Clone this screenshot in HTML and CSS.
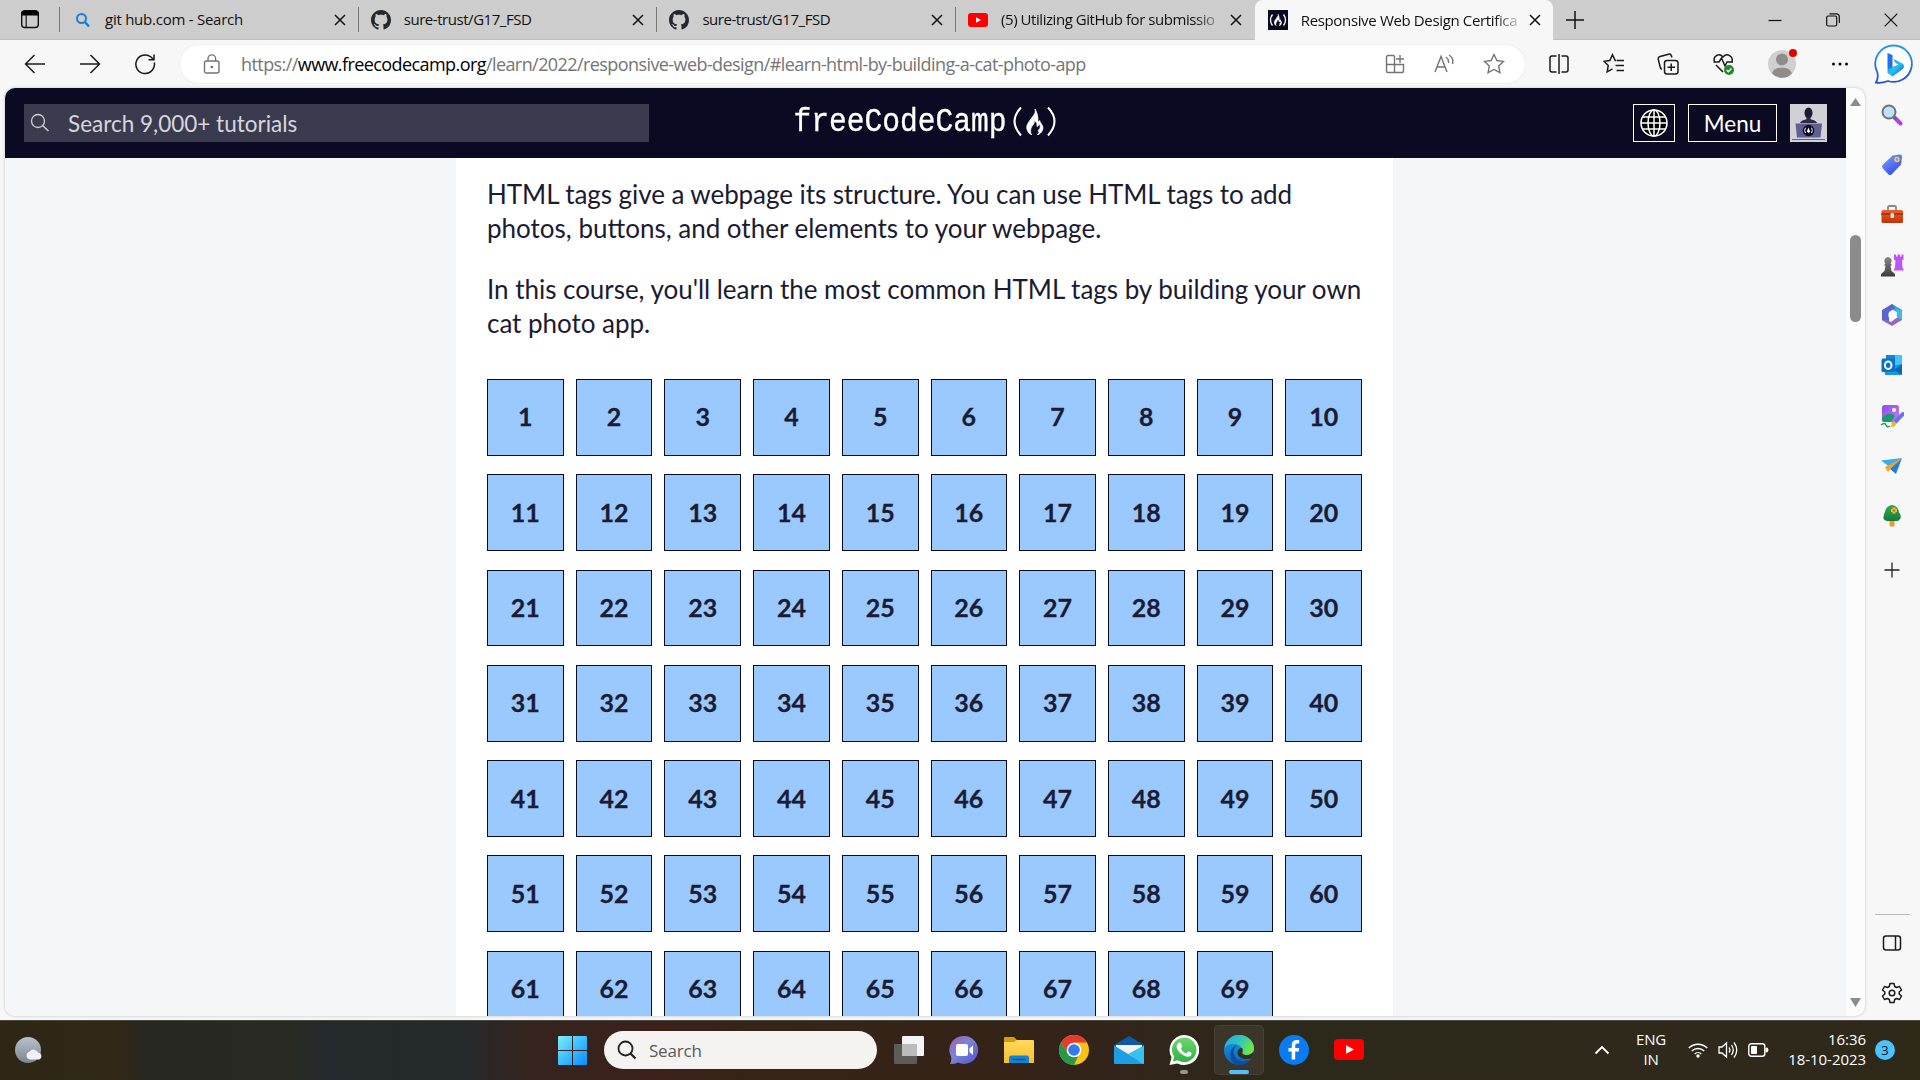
FILE: index.html
```html
<!DOCTYPE html>
<html lang="en">
<head>
<meta charset="utf-8">
<title>Responsive Web Design Certification</title>
<link rel="stylesheet" href="styles.css">
</head>
<body>
<svg width="0" height="0" class="defs">
  <defs>
    <symbol id="x" viewBox="0 0 12 12"><path d="M1 1l10 10M11 1L1 11" stroke="#111" stroke-width="1.5" fill="none"/></symbol>
    <symbol id="github" viewBox="0 0 16 16"><path fill="#24292f" d="M8 0C3.58 0 0 3.58 0 8c0 3.54 2.29 6.53 5.47 7.59.4.07.55-.17.55-.38 0-.19-.01-.82-.01-1.49-2.01.37-2.53-.49-2.69-.94-.09-.23-.48-.94-.82-1.13-.28-.15-.68-.52-.01-.53.63-.01 1.08.58 1.23.82.72 1.21 1.87.87 2.33.66.07-.52.28-.87.51-1.07-1.78-.2-3.64-.89-3.64-3.95 0-.87.31-1.59.82-2.15-.08-.2-.36-1.02.08-2.12 0 0 .67-.21 2.2.82.64-.18 1.32-.27 2-.27s1.36.09 2 .27c1.53-1.04 2.2-.82 2.2-.82.44 1.1.16 1.92.08 2.12.51.56.82 1.27.82 2.15 0 3.07-1.87 3.75-3.65 3.95.29.25.54.73.54 1.48 0 1.07-.01 1.93-.01 2.2 0 .21.15.46.55.38A8.01 8.01 0 0 0 16 8c0-4.42-3.58-8-8-8z"/></symbol>
    <symbol id="flame" viewBox="0 0 18 27"><path fill="currentColor" stroke="currentColor" stroke-width=".8" d="M9 0c1 4-1 6-4 10-3 4-6 8-4 12 .8 2 2.500 4 4.500 5-2-4-1-7 1-10 1.500-2 2-3.500 2-5 2.500 2 3 4 2.500 6 1.500 0 2-1.500 2-3 2 2 2 5 0 6.500-1 1-1 2 .500 2.500-.5 1-1 2-2 3 5-2 7-7 5-10-1-2-2.500-3-2.500-5-1 1-1.500 1.500-2 1 .5-5-1-10-3-13z"/></symbol>
    <linearGradient id="blue" x1="0" y1="0" x2="1" y2="1"><stop offset="0" stop-color="#7af0ff"/><stop offset=".5" stop-color="#3dbdff"/><stop offset="1" stop-color="#0a8cff"/></linearGradient>
    <linearGradient id="bing" x1="0" y1="0" x2="0" y2="1"><stop offset="0" stop-color="#2b9be8"/><stop offset="1" stop-color="#2350d8"/></linearGradient>
    <linearGradient id="bingb" x1="0" y1="0" x2="1" y2="1"><stop offset="0" stop-color="#1d6ff0"/><stop offset=".5" stop-color="#22c6ee"/><stop offset="1" stop-color="#1b49cc"/></linearGradient>
    <linearGradient id="tag" x1="0" y1="0" x2=".7" y2="1"><stop offset="0" stop-color="#7ba9ff"/><stop offset="1" stop-color="#3347f0"/></linearGradient>
    <linearGradient id="red" x1="0" y1="0" x2="0" y2="1"><stop offset="0" stop-color="#e8612c"/><stop offset="1" stop-color="#bd3409"/></linearGradient>
    <linearGradient id="dark" x1="0" y1="0" x2="0" y2="1"><stop offset="0" stop-color="#888"/><stop offset="1" stop-color="#3c3c3c"/></linearGradient>
    <linearGradient id="purple" x1="0" y1="0" x2="1" y2="1"><stop offset="0" stop-color="#8a4cf0"/><stop offset="1" stop-color="#c77bff"/></linearGradient>
    <linearGradient id="chat" x1="0" y1="0" x2="1" y2="1"><stop offset="0" stop-color="#9a62b0"/><stop offset=".45" stop-color="#7b83d8"/><stop offset="1" stop-color="#5252c8"/></linearGradient>
    <linearGradient id="folder" x1="0" y1="0" x2="0" y2="1"><stop offset="0" stop-color="#ffda60"/><stop offset="1" stop-color="#f7bd2a"/></linearGradient>
    <linearGradient id="edgetop" x1="0" y1="0" x2="1" y2=".5"><stop offset="0" stop-color="#25a5e0"/><stop offset=".5" stop-color="#2cc5c0"/><stop offset="1" stop-color="#70e645"/></linearGradient>
    <linearGradient id="edgelow" x1="0" y1="0" x2="0" y2="1"><stop offset="0" stop-color="#1ba0e4"/><stop offset="1" stop-color="#0b62ba"/></linearGradient>
    <linearGradient id="green" x1="0" y1="0" x2="0" y2="1"><stop offset="0" stop-color="#6fd66f"/><stop offset="1" stop-color="#2fb344"/></linearGradient>
    <linearGradient id="moon" x1="0" y1="0" x2="0" y2="1"><stop offset="0" stop-color="#b9c2cc"/><stop offset="1" stop-color="#7d8590"/></linearGradient>
    <linearGradient id="tree" x1="0" y1="0" x2="0" y2="1"><stop offset="0" stop-color="#35a853"/><stop offset="1" stop-color="#157a3c"/></linearGradient>
  </defs>
</svg>

<div class="browser">
  <div class="tabstrip">
    <div class="tab-actions">
      <svg width="20" height="20" viewBox="0 0 20 20"><rect x="1.700" y="2" width="16.600" height="16.500" rx="3" fill="none" stroke="#111" stroke-width="1.400"/><path d="M1 5a4 4 0 0 1 4-3.700h10A4 4 0 0 1 19 5v1.500H1z" fill="#000"/><path d="M6.200 6v12" stroke="#222" stroke-width="1.300"/></svg>
    </div>
    <div class="tab">
      <svg class="favicon" width="20" height="20" viewBox="0 0 20 20"><circle cx="9.500" cy="8.500" r="4.500" fill="none" stroke="#1b7fd6" stroke-width="2"/><path d="M13 12l4 4.500" stroke="#1b7fd6" stroke-width="2.400"/></svg>
      <span class="label t1">git hub.com - Search</span>
      <svg class="close" width="12" height="12"><use href="#x"/></svg>
    </div>
    <div class="tab">
      <svg class="favicon" width="20" height="20"><use href="#github"/></svg>
      <span class="label t2">sure-trust/G17_FSD</span>
      <svg class="close" width="12" height="12"><use href="#x"/></svg>
    </div>
    <div class="tab">
      <svg class="favicon" width="20" height="20"><use href="#github"/></svg>
      <span class="label t2">sure-trust/G17_FSD</span>
      <svg class="close" width="12" height="12"><use href="#x"/></svg>
    </div>
    <div class="tab">
      <svg class="favicon" width="20" height="20" viewBox="0 0 20 20"><rect y="3" width="20" height="14" rx="3" fill="#f00"/><path d="M8 7.200v5.600l5-2.800z" fill="#fff"/></svg>
      <span class="label fade t3">(5) Utilizing GitHub for submissio</span>
      <svg class="close" width="12" height="12"><use href="#x"/></svg>
    </div>
    <div class="tab active">
      <svg class="favicon" width="20" height="20" viewBox="0 0 20 20"><rect width="20" height="20" fill="#0a0a23"/><path d="M4.500 4.500q-4 5.500 0 11M15.500 4.500q4 5.500 0 11" fill="none" stroke="#fff" stroke-width="1.300"/><svg x="6" y="4" width="8" height="12" color="#fff"><use href="#flame"/></svg></svg>
      <span class="label fade t4">Responsive Web Design Certifica</span>
      <svg class="close" width="12" height="12"><use href="#x"/></svg>
    </div>
    <svg class="newtab" width="18" height="18" viewBox="0 0 18 18"><path d="M9 0v18M0 9h18" stroke="#111" stroke-width="1.500"/></svg>
    <div class="window-buttons">
      <svg width="14" height="14" viewBox="0 0 14 14"><path d="M.5 7.500h13" stroke="#111" stroke-width="1.200"/></svg>
      <svg width="14" height="14" viewBox="0 0 14 14"><rect x=".7" y="3" width="10" height="10" rx="1.500" fill="none" stroke="#111" stroke-width="1.200"/><path d="M3.500 .8h7a2.800 2.800 0 0 1 2.800 2.800v6.500" fill="none" stroke="#111" stroke-width="1.200"/></svg>
      <svg width="14" height="14" viewBox="0 0 14 14"><path d="M.7 .7l12.600 12.600M13.300 .7L.7 13.300" stroke="#111" stroke-width="1.200"/></svg>
    </div>
  </div>

  <div class="toolbar">
    <div class="nav">
      <svg width="22" height="22" viewBox="0 0 22 22"><path d="M21 11H2M10.500 2L1.500 11l9 9" class="ln"/></svg>
      <svg width="22" height="22" viewBox="0 0 22 22"><path d="M1 11h19M11.500 2l9 9-9 9" class="ln"/></svg>
      <svg width="22" height="22" viewBox="0 0 22 22"><path d="M20.300 9.500A9.300 9.300 0 1 1 17 4l2.500 2.500M20 1.500v5.300h-5.500" class="ln"/></svg>
    </div>
    <div class="address">
      <svg width="18" height="20" viewBox="0 0 18 20"><rect x="1.500" y="7" width="14.500" height="12" rx="2" class="lg"/><path d="M5 7V4.700a3.800 3.800 0 0 1 7.600 0V7" class="lg"/><circle cx="8.800" cy="13" r="1.300" fill="#666"/></svg>
      <span class="url">https://<b>www.freecodecamp.org</b>/learn/2022/responsive-web-design/#learn-html-by-building-a-cat-photo-app</span>
      <div class="address-tools">
        <svg width="20" height="20" viewBox="0 0 20 20"><path d="M9 1.500H3A1.500 1.500 0 0 0 1.500 3v14A1.500 1.500 0 0 0 3 18.500h14a1.500 1.500 0 0 0 1.500-1.500v-6.500H1.500M9.500 1.500v17M15 1v8M11 5h8" class="lg"/></svg>
        <svg width="20" height="20" viewBox="0 0 20 20"><path d="M1 18L7 2.500 13 18M3 13h8M12 3q3 2 2.500 6M15 1q5 3 3.500 9" class="lg"/></svg>
        <svg width="22" height="22" viewBox="0 0 22 22"><path d="M11 1.500l2.900 6 6.600.9-4.800 4.600 1.200 6.600L11 16.500l-5.900 3.100 1.200-6.600L1.500 8.400l6.600-.9z" class="lg"/></svg>
      </div>
    </div>
    <div class="tools">
      <svg width="22" height="22" viewBox="0 0 22 22"><path d="M8.500 3H4a2 2 0 0 0-2 2v12a2 2 0 0 0 2 2h4.500M13.500 3H18a2 2 0 0 1 2 2v12a2 2 0 0 1-2 2h-4.500M11 1v20" class="ln"/></svg>
      <svg width="22" height="22" viewBox="0 0 22 22"><path d="M13 7.500h-.8L9.500 1.700 6.800 7.500l-5.800.8 4.200 4.200-1 6.300 5.300-3M13.500 7.500h7.500M12.500 12.500H21M13.500 17.500H21" class="ln"/></svg>
      <svg width="22" height="22" viewBox="0 0 22 22"><rect x="7.500" y="7.500" width="13.500" height="13.500" rx="2.500" class="ln"/><path d="M14.200 10.500v7.500M10.500 14.200H18M4.800 16.500Q3.500 15.500 3.200 14L1.300 6.500a2.500 2.500 0 0 1 1.800-3L11.500 1.200a2.500 2.500 0 0 1 3 1.800l.4 1.500" class="ln"/></svg>
      <svg width="24" height="24" viewBox="0 0 24 24"><path d="M2.500 10C.5 4 7 .5 11 5c4-4.500 10.500-1 9 5M1.500 10H7l2.500-4 3.500 8 2-4h6M4 13l7 7" class="ln"/><circle cx="17" cy="18" r="5" fill="#1d8a25"/><path d="M14.700 18l1.700 1.700 3-3.200" stroke="#fff" stroke-width="1.300" fill="none"/></svg>
      <svg class="profile" width="30" height="34" viewBox="0 0 30 34"><circle cx="14" cy="19" r="14" fill="#d2d0ce"/><circle cx="14" cy="14.500" r="6" fill="#8f8c8a"/><path d="M4 28.500Q6 22.500 14 22.500t10 6a14 14 0 0 1-20 0z" fill="#8f8c8a"/><circle cx="25" cy="8" r="4" fill="#e30000"/></svg>
      <svg width="18" height="6" viewBox="0 0 18 6"><circle cx="2.500" cy="3" r="1.500"/><circle cx="9" cy="3" r="1.500"/><circle cx="15.500" cy="3" r="1.500"/></svg>
      <svg class="bing" width="40" height="40" viewBox="0 0 40 40"><path d="M20 1.500A18.200 18.200 0 1 1 14 37Q7 39.500 2 38.500 5 33 3 27.500A18.300 18.300 0 0 1 20 1.500z" fill="#fff" stroke="url(#bing)" stroke-width="1.800"/><path d="M13.500 9l5 2v17l-5-3.500z" fill="#2370ec"/><path d="M19.500 15l9 4.500c2.500 2 1.500 5-1 6.500l-9 6.500-5-3.500v-4l11-4.500-3-1.500z" fill="url(#bingb)"/></svg>
    </div>
  </div>

  <div class="body">
    <main class="page">
      <div class="viewport">
        <header class="fcc-header">
          <div class="fcc-search">
            <svg width="20" height="20" viewBox="0 0 20 20"><circle cx="8" cy="8" r="6.500" fill="none" stroke="#d0d0d5" stroke-width="1.300"/><path d="M12.800 12.800L18.500 18" stroke="#d0d0d5" stroke-width="1.500"/></svg>
            <span>Search 9,000+ tutorials</span>
          </div>
          <div class="logo"><span class="word">freeCodeCamp</span><svg width="46" height="32" viewBox="0 0 46 32"><path d="M9 1.500Q-4 15 9 29.500M36 1.500q13 13.500 0 28" fill="none" stroke="#fff" stroke-width="2"/><svg x="14" y="3" width="18" height="26" color="#fff"><use href="#flame"/></svg></svg></div>
          <div class="fcc-right">
            <div class="lang"><svg width="28" height="28" viewBox="0 0 28 28"><circle cx="14" cy="14" r="13" fill="#000" stroke="#fff" stroke-width="1.600"/><ellipse cx="14" cy="14" rx="6" ry="13" fill="none" stroke="#fff" stroke-width="1.500"/><path d="M14 1v26M1 14h26M3 8h22M3 20h22" stroke="#fff" stroke-width="1.500"/></svg></div>
            <div class="menu">Menu</div>
            <svg width="37" height="38" viewBox="0 0 37 38"><rect width="37" height="38" fill="#d0d0d5"/><ellipse cx="18.500" cy="9" rx="4" ry="5.500" fill="#1b1b32"/><path d="M10 19q1-3 6-3.500l1-2h3l1 2q5 .5 6 3.500z" fill="#2a2a40"/><path d="M5.500 19.500h26.500l-1.500 14H7z" fill="#5f5f94"/><circle cx="18.500" cy="26.500" r="5.800" fill="#0a0a23"/><path d="M15.500 23.800q-1.800 2.600 0 5.200M21.500 23.800q1.800 2.600 0 5.200" stroke="#fff" fill="none"/><path d="M18.500 23.500l1.700 4-1.700 1.500-1.700-1.500z" fill="#fff"/><path d="M2 35.500h33" stroke="#5f5f94"/></svg>
          </div>
        </header>
        <div class="content">
          <article class="card">
            <p><span class="tight">HTML tags give a webpage its structure. You can use HTML tags to add</span><br>photos, buttons, and other elements to your webpage.</p>
            <p class="snug">In this course, you'll learn the most common HTML tags by building your own<br>cat photo app.</p>
            <div class="steps">
              <a>1</a><a>2</a><a>3</a><a>4</a><a>5</a><a>6</a><a>7</a><a>8</a><a>9</a><a>10</a>
              <a>11</a><a>12</a><a>13</a><a>14</a><a>15</a><a>16</a><a>17</a><a>18</a><a>19</a><a>20</a>
              <a>21</a><a>22</a><a>23</a><a>24</a><a>25</a><a>26</a><a>27</a><a>28</a><a>29</a><a>30</a>
              <a>31</a><a>32</a><a>33</a><a>34</a><a>35</a><a>36</a><a>37</a><a>38</a><a>39</a><a>40</a>
              <a>41</a><a>42</a><a>43</a><a>44</a><a>45</a><a>46</a><a>47</a><a>48</a><a>49</a><a>50</a>
              <a>51</a><a>52</a><a>53</a><a>54</a><a>55</a><a>56</a><a>57</a><a>58</a><a>59</a><a>60</a>
              <a>61</a><a>62</a><a>63</a><a>64</a><a>65</a><a>66</a><a>67</a><a>68</a><a>69</a>
            </div>
          </article>
        </div>
      </div>
      <div class="scrollbar">
        <svg width="11" height="8" viewBox="0 0 11 8"><path d="M5.500 0L11 8H0z" fill="#8b8b8b"/></svg>
        <div class="thumb"></div>
        <svg class="down" width="11" height="9" viewBox="0 0 11 9"><path d="M5.500 9L11 0H0z" fill="#8b8b8b"/></svg>
      </div>
    </main>
    <aside class="sidebar">
      <div class="apps">
        <svg viewBox="0 0 24 24"><path d="M15 15l5.500 5.500" stroke="#b23cf5" stroke-width="4" stroke-linecap="round"/><path d="M13 13l3 3" stroke="#666" stroke-width="3"/><circle cx="9" cy="9" r="6.500" fill="#bfe2fa" stroke="#70757a" stroke-width="2"/></svg>
        <svg viewBox="0 0 24 24"><path d="M12.500 2.500L20 1.500q2 0 2 2l-1 8L11.500 21.500q-1.500 1-3 0L2.500 15q-1-1.500 0-3z" fill="url(#tag)"/><circle cx="17" cy="6.500" r="2" fill="#8a8af0" stroke="#ffd12e" stroke-width="1.500"/></svg>
        <svg viewBox="0 0 24 24"><path d="M8 7V4.500Q8 3 9.500 3h5Q16 3 16 4.500V7" fill="none" stroke="#888" stroke-width="1.800"/><rect x="1.500" y="7" width="21.500" height="13" rx="1.500" fill="url(#red)"/><path d="M1 11h22" stroke="#a32c06" stroke-width="1.500"/><rect x="10.500" y="10" width="3.500" height="5" rx="1" fill="#ddd"/></svg>
        <svg viewBox="0 0 24 24"><path d="M14 1.500h2v2h1.500v-2h2.500v2h1.500v-2h2v5l-1.500 1 .5 7 1.500 3h-10.500l1.500-3 .5-7-1.500-1z" fill="#bd55f5"/><path d="M8 4a3.800 3.800 0 0 1 2.500 6.500l1.500 1.500-1.500 1 1 5 3.500 3v2.500H1V21l3.500-3 1-5L4 12l1.500-1.500A3.800 3.800 0 0 1 8 4z" fill="url(#dark)"/></svg>
        <svg viewBox="0 0 24 24"><path d="M12 1l10 6v10l-5-3V9l-7-4-4 2z" fill="#2e9ce0"/><path d="M12 1L2 7v10l5 3 2-2V9l6-4z" fill="#5a63cf"/><path d="M2 17l10 6 10-6v-5l-7 4-4 3-4-2z" fill="#9467c2"/><path d="M15 5l7 3v9l-5-3V9z" fill="#3bbbe8"/><path d="M12 8l3.500 2v4L12 16l-3.500-2v-4z" fill="#fff"/></svg>
        <svg viewBox="0 0 24 24"><rect x="6" y="2" width="16" height="12" rx="1" fill="#42c5f5"/><path d="M6 2h9v10H6z" fill="#1683cf"/><path d="M4 14l18-3v11H5z" fill="#1997e0"/><path d="M22 11v11l-8-5z" fill="#0c65b5"/><rect x="1.500" y="5.500" width="13.500" height="13.500" rx="1.500" fill="#0873c9"/><ellipse cx="8.200" cy="12.200" rx="3.300" ry="3.700" fill="none" stroke="#fff" stroke-width="2"/></svg>
        <svg viewBox="0 0 24 24"><rect x="2" y="1" width="17" height="17" rx="2.500" fill="url(#purple)"/><circle cx="14" cy="6" r="2" fill="#fff"/><path d="M2 14q8-8 13-2l-4 6H4q-2 0-2-2z" fill="#159c68"/><path d="M23 10L14 19" stroke="#6b72e8" stroke-width="4" stroke-linecap="round"/><path d="M14 17l2.500 2.500q-2 4.500-6 3 2-2 .5-3.500z" fill="#f9b427"/><path d="M1 21q4-3 5 0t4 1" fill="none" stroke="#159c68" stroke-width="1.500"/></svg>
        <svg viewBox="0 0 24 24"><path d="M1 6.500L22 4 11 14z" fill="#37abf4"/><path d="M22 4l-6 16-6-5z" fill="#2479e4"/><path d="M22 4L5 13l3 5 3-4z" fill="#f2a31b"/></svg>
        <svg viewBox="0 0 24 24"><rect x="9.500" y="16" width="5" height="6.500" rx="1" fill="#f0962b"/><path d="M12 1q6 1 7 7 3 5 1 7-1 2-3 2H7q-4-1-3.500-4 0-3 1.500-5 1-6 7-7z" fill="url(#tree)"/><path d="M14 3.500v6M11 6.500h6" stroke="#fabe20" stroke-width="3"/><circle cx="14" cy="6.500" r="1.200" fill="#e05c1c"/></svg>
        <svg class="plus" viewBox="0 0 24 24"><path d="M12 4.500v15M4.500 12h15" stroke="#222" stroke-width="1.300"/></svg>
      </div>
      <div class="side-bottom">
        <svg viewBox="0 0 24 24"><rect x="3.500" y="5" width="17" height="14" rx="2.500" class="ln"/><path d="M15.500 5v14" class="ln"/></svg>
        <svg viewBox="0 0 24 24"><path d="M10 2.500h4l.7 3 1.800 1 3-1 2 3.500-2.300 2v2l2.300 2-2 3.500-3-1-1.800 1-.7 3h-4l-.7-3-1.800-1-3 1-2-3.500 2.300-2v-2L2.500 9l2-3.500 3 1 1.800-1z" class="ln" stroke-linejoin="round"/><circle cx="12" cy="12" r="2.800" class="ln"/></svg>
      </div>
    </aside>
  </div>
</div>

<footer class="taskbar">
  <svg class="weather" width="30" height="30" viewBox="0 0 30 30"><circle cx="14" cy="15" r="13" fill="url(#moon)"/><path d="M16 24.500a4 4 0 0 1-.5-7.800 5 5 0 0 1 8.700 1A3.500 3.500 0 0 1 25 24.500z" fill="#eef1f6"/></svg>
  <svg class="start" width="29" height="29" viewBox="0 0 29 29"><path fill="url(#blue)" d="M0 1q0-1 1-1h13v14H0zM15 0h13q1 0 1 1v13H15zM0 15h14v14H1q-1 0-1-1zM15 15h14v13q0 1-1 1H15z"/></svg>
  <div class="search">
    <svg width="20" height="20" viewBox="0 0 20 20"><circle cx="8.500" cy="8.500" r="7" fill="none" stroke="#222" stroke-width="1.800"/><path d="M13.500 13.500l5 5" stroke="#222" stroke-width="2.300"/></svg>
    <span>Search</span>
  </div>
  <div class="pinned">
    <div class="app"><svg viewBox="0 0 30 30"><rect x="8" y="1" width="22" height="20" rx="1" fill="#f4f4f4"/><rect y="9" width="23" height="20" rx="1" fill="#666" opacity=".85"/><rect x="8" y="9" width="15" height="12" fill="#bbb"/></svg></div>
    <div class="app"><svg viewBox="0 0 30 30"><path d="M15 1a14 14 0 1 1-6 26.600Q5 29.500 1 29q2-3 1-7.500A14 14 0 0 1 15 1z" fill="url(#chat)"/><rect x="7" y="9" width="12" height="12" rx="2" fill="#fff"/><path d="M20.500 13.500l3.500-3v9.500l-3.500-3z" fill="#fff"/></svg></div>
    <div class="app"><svg viewBox="0 0 30 30"><path d="M0 3q0-1 1-1h9l3 3h5v6H0z" fill="#d99b0a"/><path d="M0 7h10l3-2h16q1 0 1 1v22H0z" fill="url(#folder)"/><path d="M5 28v-5q0-2.500 2.500-2.500h15Q25 20.500 25 23v5z" fill="#1482d4"/><path d="M8.500 24.500h13" stroke="#0b5291" stroke-width="1.300"/></svg></div>
    <div class="app"><svg viewBox="0 0 30 30"><circle cx="15" cy="15" r="15" fill="#fbc117"/><path d="M2 7.500a15 15 0 0 1 26 0H15l-6 11z" fill="#e33b2e"/><path d="M2 7.500l7 11q3 4.500 10 3L15 30A15 15 0 0 1 2 7.500z" fill="#279847"/><circle cx="15" cy="15" r="7.300" fill="#fff"/><circle cx="15" cy="15" r="5.800" fill="#2f7bf0"/></svg></div>
    <div class="app"><svg viewBox="0 0 30 30"><path d="M15 1l15 9v5H0v-5z" fill="#0e5aa6"/><path d="M2 10h26v12H2z" fill="#f3f3f3"/><path d="M0 10.500L30 28.500q0 .5-1 .5H1q-1 0-1-1z" fill="#1d9ee6"/><path d="M30 10.500v17.500q0 1-1 1L14 19z" fill="#36c1f3"/></svg></div>
    <div class="app whatsapp"><svg viewBox="0 0 30 30"><path d="M15 0A15 15 0 1 1 8.500 28.400L.5 30l2-7.500A15 15 0 0 1 15 0z" fill="#fff"/><path d="M15.300 2.500a12.300 12.300 0 1 1-6.500 22.800L4 26.500l1.200-4.700A12.300 12.300 0 0 1 15.300 2.500z" fill="url(#green)"/><path d="M9.500 8q1.500-1 2.500.2l1.200 3q0 .8-1.500 2.300 2 3.500 5.500 5l2-2q.7-.3 3.300 1.300.5 1.200-.7 2.900-2.800 2-7-.3-4.500-2.400-6.500-6.200-2-4 1.200-6.200z" fill="#fff"/></svg><i></i></div>
    <div class="app edge"><svg viewBox="0 0 30 30"><circle cx="15" cy="15" r="15" fill="url(#edgelow)"/><path d="M1 10.500C4 3 9 0 15 0c9 0 15 6.500 15 13 0 5-3.500 7-7 7-4 0-5.500-1.500-4.500-3 1-2.500-1-7-7-8Q4.500 8 1 13z" fill="url(#edgetop)"/><path d="M13 10.500c-4 3-4.500 8-1.500 12 3.500 4.500 9 4 14.500 2.500A15 15 0 0 1 12 29.700C4 25 5 12 13 10.500z" fill="#0d4f9e"/><path d="M18.500 17c-1 1.500.5 3 4.500 3 2.500 0 4.500-1 6-3l1 1.500-2.500 5c-5 1.500-14 .5-14-6 0-3 3.500-5.500 5-4z" fill="#35301f"/></svg><i></i></div>
    <div class="app"><svg viewBox="0 0 30 30"><circle cx="15" cy="15" r="15" fill="#0b7bf1"/><path d="M12.700 24.500v-8H9.500V13h3.200v-2.500q0-5.500 5-5.500h2.500v3.500h-2q-2 0-2 2V13h4l-.6 3.500h-3.400v8z" fill="#fff"/></svg></div>
    <div class="app"><svg viewBox="0 0 30 30"><rect y="4" width="30" height="21" rx="4" fill="#f00"/><path d="M12 10.200v8.600l8-4.300z" fill="#fff"/></svg></div>
  </div>
  <div class="tray">
    <svg class="chev" width="16" height="12" viewBox="0 0 16 12"><path d="M1.500 9.500L8 3l6.500 6.500" fill="none" stroke="#fff" stroke-width="1.800"/></svg>
    <div class="lang-ind">ENG<br>IN</div>
    <svg class="wifi" width="20" height="16" viewBox="0 0 20 16"><path d="M.8 6a13 13 0 0 1 18.400 0M3.800 9a8.800 8.800 0 0 1 12.400 0M6.700 12a4.700 4.700 0 0 1 6.600 0" fill="none" stroke="#fff" stroke-width="1.400"/><circle cx="10" cy="14" r="1.700" fill="#fff"/></svg>
    <svg class="vol" width="20" height="18" viewBox="0 0 20 18"><path d="M1 6h3l4.500-4v14L4 12H1zM11 6.500q1.800 2.500 0 5M13.500 4q3.500 5 0 10M16 1.500q5.500 7.500 0 15" fill="none" stroke="#fff" stroke-width="1.300"/></svg>
    <svg class="bat" width="21" height="14" viewBox="0 0 21 14"><rect x=".8" y=".8" width="16" height="12.400" rx="2.500" fill="none" stroke="#fff" stroke-width="1.400"/><rect x="3" y="3" width="6" height="8" rx="1" fill="#fff"/><path d="M18 5q2-.5 2 2t-2 2z" fill="#fff" stroke="#fff"/></svg>
    <div class="clock">16:36<br>18-10-2023</div>
    <div class="badge">3</div>
  </div>
</footer>
</body>
</html>
```
FILE: styles.css
```css
* { box-sizing: border-box; }
body { margin: 0; width: 1920px; height: 1080px; overflow: hidden; display: flex; flex-direction: column; font-family: "Open Sans", "Noto Sans", sans-serif; background: #f7f7f7; color: #111; }
svg { flex: none; display: block; }
.defs { position: absolute; }
.ln { fill: none; stroke: #1b1b1b; stroke-width: 1.500; }
.lg { fill: none; stroke: #737373; stroke-width: 1.400; }
.browser { height: 1020px; display: flex; flex-direction: column; flex: none; }

.tabstrip { height: 40px; flex: none; display: flex; align-items: center; background: #cdcdcd; border-bottom: 1px solid #bfbfbf; }
.tab-actions { width: 60px; height: 25px; padding: 2px 0 0 20px; border-right: 1px solid #777; }
.tab { width: 298.700px; height: 25px; display: flex; align-items: center; padding: 0 12px 0 12px; border-right: 1px solid #777; }
.tab:nth-child(5) { border-right-color: transparent; }
.tab.active { height: 41px; margin-bottom: -1px; background: #f7f7f7; border: 0; border-radius: 8px 8px 0 0; padding-left: 13px; }
.favicon { margin-right: 13px; }
.label { flex: 1; min-width: 0; font-size: 15px; line-height: 20px; padding-bottom: 1px; white-space: nowrap; }
.fade { -webkit-mask-image: linear-gradient(90deg, #000 88%, rgba(0,0,0,.15) 100%); mask-image: linear-gradient(90deg, #000 88%, rgba(0,0,0,.15) 100%); }
.close { margin-left: 9px; }
.t2 { letter-spacing: -0.450px; }
.t1 { letter-spacing: -0.250px; }
.t3 { letter-spacing: -0.450px; }
.t4 { letter-spacing: -0.350px; }
.newtab { margin-left: 13px; }
.window-buttons { margin-left: auto; display: flex; gap: 44px; padding-right: 22px; }

.toolbar { height: 48px; flex: none; display: flex; align-items: center; }
.nav { width: 180px; padding-left: 24px; display: flex; gap: 33px; }
.address { width: 1345px; height: 38px; border-radius: 19px; background: #fff; display: flex; align-items: center; padding: 0 20px 0 23px; box-shadow: 0 0 2px #ddd; }
.url { margin-left: 20px; padding-bottom: 1px; font-size: 18px; color: #757575; white-space: nowrap; letter-spacing: -0.580px; }
.url b { font-weight: 400; color: #000; }
.address-tools { margin-left: auto; display: flex; align-items: center; gap: 29px; }
.tools { flex: 1; display: flex; align-items: center; padding-left: 23px; gap: 32.500px; }
.profile { margin-top: -5px; }
.bing { margin-left: -7px; }

.body { flex: 1; min-height: 0; display: flex; }
.page { width: 1860px; height: 928px; margin-left: 5px; display: flex; border-radius: 10px; overflow: hidden; background: #fcfcfc; box-shadow: 0 0 3px #bbb; flex: none; }
.viewport { width: 1841px; display: flex; flex-direction: column; overflow: hidden; background: #f5f6f7; }
.fcc-header { height: 70px; flex: none; display: grid; grid-template-columns: 625px 1fr 625px; align-items: center; padding: 0 19px; background: #0a0a23; font-family: Lato, sans-serif; }
.fcc-search { height: 38px; background: #3b3b4f; display: flex; align-items: center; padding-left: 6px; color: #d6d6dc; font-size: 22.500px; }
.fcc-search span { margin-left: 18px; white-space: nowrap; }
.logo { display: flex; align-items: center; justify-content: center; color: #fff; margin-top: -3px; }
.word { font-family: "Liberation Mono", monospace; font-size: 29.600px; line-height: 32px; transform: scaleY(1.120); -webkit-text-stroke: .3px #fff; }
.logo svg { margin-left: 5px; }
.fcc-right { display: flex; justify-content: flex-end; gap: 13px; }
.lang, .menu { height: 38px; border: 1px solid #fff; display: flex; align-items: center; justify-content: center; }
.lang { width: 42px; }
.menu { width: 89px; color: #fff; font-size: 22.500px; }

.content { flex: 1; display: flex; justify-content: center; min-height: 0; overflow: hidden; }
.card { width: 937px; height: 1000px; margin-left: -2px; background: #fff; padding: 19px 31px 0; font-family: Lato, sans-serif; font-size: 26px; line-height: 34px; color: #1b1b32; }
.card p { margin: 0 0 27px; white-space: nowrap; }
.tight { letter-spacing: -0.070px; }
.snug { letter-spacing: -0.030px; }
.steps { display: grid; grid-template-columns: repeat(10, 1fr); column-gap: 12px; row-gap: 18.600px; margin-top: 39px; }
.steps a { aspect-ratio: 1; border: 1px solid #0a0a23; background: #99c9ff; display: flex; align-items: center; justify-content: center; padding-bottom: 2px; font-weight: 700; font-size: 25px; -webkit-text-stroke: .3px #1b1b32; }

.scrollbar { width: 19px; display: flex; flex-direction: column; align-items: center; padding: 10px 1px 9px 0; }
.thumb { width: 11px; height: 87px; margin-top: 129px; border-radius: 6px; background: #8b8b8b; }
.down { margin-top: auto; }
.sidebar { width: 55px; display: flex; flex-direction: column; align-items: center; }
.sidebar svg { width: 24px; height: 24px; }
.apps { display: flex; flex-direction: column; gap: 26.100px; padding: 15px 1px 0 0; }
.apps .plus { margin-top: 4px; }
.side-bottom { margin-top: auto; width: 35px; border-top: 1px solid #bbb; padding: 16px 0 15px 5px; display: flex; flex-direction: column; gap: 26px; }

.taskbar { height: 60px; flex: none; display: flex; align-items: center; color: #fff; border-top: 1px solid #4a4a42; padding-bottom: 1px; background: linear-gradient(90deg, #2f2716 0, #302716 120px, #272822 150px, #272922 290px, #23292c 330px, #24292b 460px, #35231d 530px, #3c211b 650px, #352417 760px, #342316 960px, #33241a 1100px, #2d291a 1250px, #2f291a 1920px); }
.weather { margin-left: 14px; }
.start { margin-left: 514px; }
.search { margin-left: 17px; width: 273px; height: 38px; border-radius: 19px; background: #f4f3f1; display: flex; align-items: center; padding-left: 13px; color: #5a5a5a; font-size: 17px; }
.search span { margin-left: 12px; letter-spacing: -0.200px; }
.pinned { display: flex; margin-left: 7px; gap: 5px; }
.app { width: 50px; height: 50px; display: flex; align-items: center; justify-content: center; border-radius: 5px; position: relative; }
.app svg { width: 30px; height: 30px; }
.app i { position: absolute; bottom: 1px; height: 4px; border-radius: 2px; }
.whatsapp i { width: 8px; background: #9a958d; }
.edge { background: #3b3629; box-shadow: inset 0 0 0 1px #464134; }
.edge i { width: 20px; background: #4cc2ff; }
.tray { margin-left: auto; display: flex; align-items: center; font-size: 15px; line-height: 20px; padding-right: 25px; }
.lang-ind { width: 40px; text-align: center; margin: 0 17px 2px 21px; letter-spacing: -0.200px; }
.vol { margin-left: 10px; }
.bat { margin-left: 10px; }
.clock { width: 97px; text-align: right; padding-bottom: 2px; letter-spacing: -0.050px; }
.badge { width: 20px; height: 20px; border-radius: 50%; background: #4cc2ff; color: #111; text-align: center; margin-left: 9px; font-size: 13px; }
```
